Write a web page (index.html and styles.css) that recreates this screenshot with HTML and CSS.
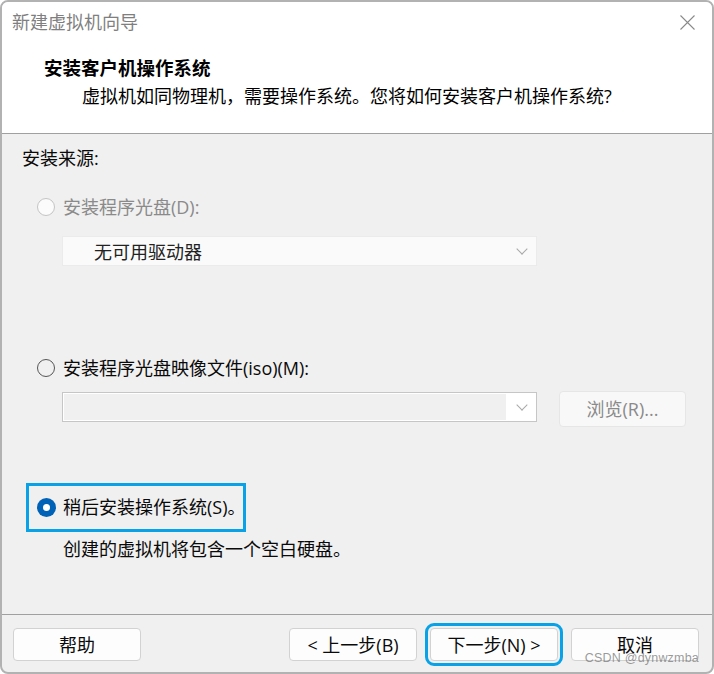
FILE: index.html
```html
<!DOCTYPE html>
<html lang="zh-CN">
<head>
    <meta charset="UTF-8">
    <title>新建虚拟机向导</title>
    <link rel="stylesheet" href="styles.css">
</head>
<body>
    <div class="window">
        <div class="top">
            <div class="titlebar">
                <span class="title">新建虚拟机向导</span>
                <svg class="close" width="15" height="15" viewBox="0 0 15 15">
                    <path d="M0.5 0.5 L14.5 14.5 M14.5 0.5 L0.5 14.5" stroke="#8a8a8a" stroke-width="1.1" fill="none"/>
                </svg>
            </div>
            <div class="heading">安装客户机操作系统</div>
            <div class="subtitle">虚拟机如同物理机，需要操作系统。您将如何安装客户机操作系统?</div>
        </div>

        <div class="content">
            <div class="section-label">安装来源:</div>

            <div class="option disabled option-cd">
                <span class="radio"></span>
                <span>安装程序光盘(D):</span>
            </div>
            <div class="select select-disabled">
                <span>无可用驱动器</span>
                <span class="chevron"></span>
            </div>

            <div class="option option-iso">
                <span class="radio"></span>
                <span>安装程序光盘映像文件(iso)(M):</span>
            </div>
            <div class="iso-row">
                <div class="combo">
                    <div class="combo-field"></div>
                    <span class="chevron"></span>
                </div>
                <button class="btn btn-browse">浏览(R)...</button>
            </div>

            <div class="focus-box">
                <span class="radio checked"></span>
                <span class="focus-label">稍后安装操作系统(S)。</span>
            </div>
            <div class="note">创建的虚拟机将包含一个空白硬盘。</div>
        </div>

        <div class="footer">
            <button class="btn">帮助</button>
            <div class="spacer"></div>
            <button class="btn">&lt; 上一步(B)</button>
            <button class="btn btn-focus">下一步(N) &gt;</button>
            <button class="btn">取消</button>
        </div>

        <div class="watermark">CSDN @dynwzmba</div>
    </div>
</body>
</html>
```

FILE: styles.css
```css
html, body {
    margin: 0;
    padding: 0;
    background: #ffffff;
}
body {
    font-family: "Open Sans", "Noto Sans CJK SC", sans-serif;
    font-size: 18px;
    color: #0a0a0a;
}
.window {
    position: relative;
    width: 714px;
    height: 674px;
    box-sizing: border-box;
    border: 2px solid #b2b2b2;
    border-radius: 8px;
    overflow: hidden;
    display: flex;
    flex-direction: column;
    background: #f0f0f0;
}
.top {
    background: #fff;
    height: 131px;
    border-bottom: 1px solid #a0a0a0;
}
.titlebar {
    height: 40px;
    display: flex;
    align-items: center;
    justify-content: space-between;
    padding: 0 17px 0 10px;
}
.title {
    color: #7f7f7f;
    line-height: 24px;
}
.close {
    display: block;
}
.heading {
    margin: 14px 0 0 42px;
    font-weight: 700;
    font-size: 18.5px;
    line-height: 24px;
    color: #000;
}
.subtitle {
    margin: 4px 0 0 80px;
    line-height: 24px;
    color: #000;
}
.content {
    flex: 1;
    padding: 12px 0 0 20px;
}
.section-label {
    line-height: 24px;
}
.option {
    display: flex;
    align-items: center;
    gap: 8px;
    line-height: 24px;
    margin-left: 15px;
}
.option-cd {
    margin-top: 25px;
}
.option-iso {
    margin-top: 90px;
}
.disabled {
    color: #8a8a8a;
}
.radio {
    width: 16px;
    height: 16px;
    border: 1.5px solid #555;
    border-radius: 50%;
    box-sizing: content-box;
    flex: none;
}
.disabled .radio {
    border-color: #c4c4c4;
    background: #fbfbfb;
}
.radio.checked {
    width: 19px;
    height: 19px;
    border: none;
    background: #0062b6;
    position: relative;
}
.radio.checked::after {
    content: "";
    position: absolute;
    left: 6px;
    top: 6px;
    width: 7px;
    height: 7px;
    border-radius: 50%;
    background: #fff;
}
.select {
    margin: 17px 0 0 40px;
    width: 475px;
    height: 30px;
    box-sizing: border-box;
    display: flex;
    align-items: center;
    justify-content: space-between;
    padding: 0 10px 0 31px;
}
.select-disabled {
    background: #fafafa;
    border: 1px solid #ebebeb;
    color: #222;
}
.chevron {
    width: 7px;
    height: 7px;
    border-right: 1px solid #a8a8a8;
    border-bottom: 1px solid #a8a8a8;
    transform: rotate(45deg);
    margin-top: -5px;
}
.iso-row {
    display: flex;
    align-items: flex-start;
    gap: 22px;
    margin: 11px 0 0 40px;
}
.combo {
    margin-top: 1px;
    width: 475px;
    height: 30px;
    box-sizing: border-box;
    border: 1px solid #c6c6c6;
    background: #fff;
    display: flex;
    align-items: center;
    padding: 1px 10px 1px 1px;
    gap: 10px;
}
.combo-field {
    width: 444px;
    height: 100%;
    background: #f0f0f0;
}
.combo .chevron {
    margin-left: 2px;
}
.btn {
    font-family: "Open Sans", "Noto Sans CJK SC", sans-serif;
    font-size: 18px;
    color: #0a0a0a;
    background: #fdfdfd;
    border: 1px solid #d2d2d2;
    border-radius: 4px;
    width: 128px;
    height: 33px;
    padding: 0;
    line-height: 24px;
}
.btn-browse {
    width: 127px;
    height: 36px;
    background: #f8f8f8;
    border-color: #e6e6e6;
    color: #8a8a8a;
}
.focus-box {
    margin: 56px 0 0 4px;
    display: inline-flex;
    align-items: center;
    gap: 7px;
    border: 3px solid #0aa2e6;
    padding: 9px 0 10px 8px;
    line-height: 24px;
}
.focus-label {
    margin-right: -3px;
}
.note {
    margin: 5px 0 0 41px;
    line-height: 24px;
}
.footer {
    border-top: 1px solid #a0a0a0;
    height: 58px;
    box-sizing: border-box;
    display: flex;
    align-items: flex-start;
    padding: 13px 13px 0 11px;
    gap: 13px;
}
.spacer {
    flex: 1;
}
.btn-focus {
    outline: 3px solid #0aa2e6;
    outline-offset: 2px;
}
.watermark {
    position: absolute;
    right: 13px;
    bottom: 7px;
    font-family: "Liberation Sans", sans-serif;
    font-size: 12.5px;
    color: rgba(120, 120, 120, 0.75);
    letter-spacing: 0.2px;
}
```
